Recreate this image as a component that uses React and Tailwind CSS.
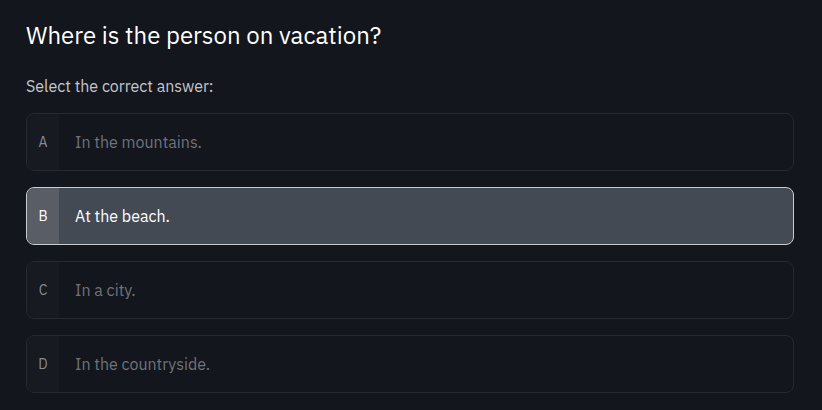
const options = [
  { key: "A", text: "In the mountains." },
  { key: "B", text: "At the beach.", selected: true },
  { key: "C", text: "In a city." },
  { key: "D", text: "In the countryside." },
];

export default function App() {
  return (
    <div
      className="min-h-[410px] w-[822px] bg-[#13161d] px-[26px] pt-[20px]"
      style={{ fontFamily: "'IBM Plex Sans', Inter, 'Noto Sans', sans-serif" }}
    >
      <h1 className="text-[24px] leading-[30px] text-white">Where is the person on vacation?</h1>
      <p className="mt-[26px] text-[16px] leading-[20px] text-[#c4c7cc]">Select the correct answer:</p>
      <div className="mt-[17px] flex w-[768px] flex-col gap-[16px]">
        {options.map((o) => (
          <div
            key={o.key}
            className={`flex h-[58px] overflow-hidden rounded-lg border ${
              o.selected ? "border-[#c9ccd1] bg-[#434a54]" : "border-[#252932] bg-[#13161d]"
            }`}
          >
            <div
              className={`flex w-[32px] shrink-0 items-center justify-center text-[14px] ${
                o.selected ? "bg-[#585d66] text-white" : "bg-[#171a21] text-[#858a92]"
              }`}
            >
              {o.key}
            </div>
            <div
              className={`flex items-center pl-[16px] text-[16px] ${
                o.selected ? "text-white" : "text-[#6f737a]"
              }`}
            >
              {o.text}
            </div>
          </div>
        ))}
      </div>
    </div>
  );
}
